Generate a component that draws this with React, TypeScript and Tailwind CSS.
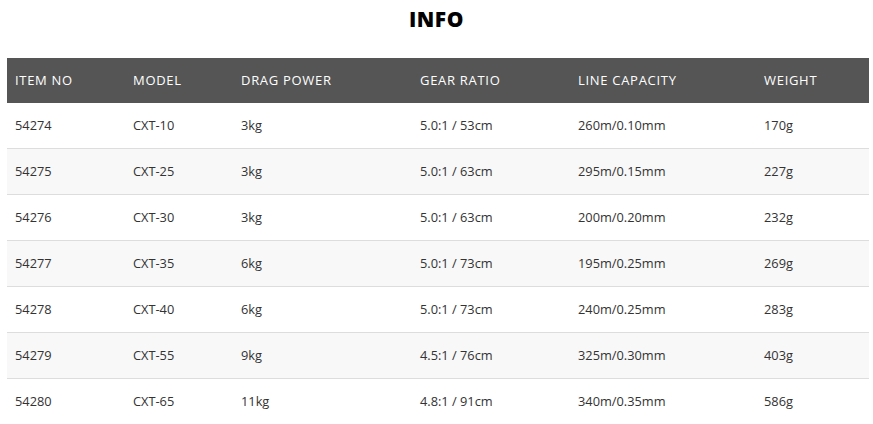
import React from 'react';

const columns = [
  { label: 'ITEM NO', width: 'w-[118px]' },
  { label: 'MODEL', width: 'w-[108px]' },
  { label: 'DRAG POWER', width: 'w-[179px]' },
  { label: 'GEAR RATIO', width: 'w-[158px]' },
  { label: 'LINE CAPACITY', width: 'w-[186px]' },
  { label: 'WEIGHT', width: 'w-[113px]' },
];

const rows = [
  ['54274', 'CXT-10', '3kg', '5.0:1 / 53cm', '260m/0.10mm', '170g'],
  ['54275', 'CXT-25', '3kg', '5.0:1 / 63cm', '295m/0.15mm', '227g'],
  ['54276', 'CXT-30', '3kg', '5.0:1 / 63cm', '200m/0.20mm', '232g'],
  ['54277', 'CXT-35', '6kg', '5.0:1 / 73cm', '195m/0.25mm', '269g'],
  ['54278', 'CXT-40', '6kg', '5.0:1 / 73cm', '240m/0.25mm', '283g'],
  ['54279', 'CXT-55', '9kg', '4.5:1 / 76cm', '325m/0.30mm', '403g'],
  ['54280', 'CXT-65', '11kg', '4.8:1 / 91cm', '340m/0.35mm', '586g'],
];

export default function App() {
  return (
    <div className="w-[873px] h-[424px] bg-white px-[7px] font-['Open_Sans',sans-serif] overflow-hidden">
      <h2 className="h-[58px] pt-[5px] text-center text-[21px] font-extrabold text-black leading-[28px] tracking-[0.5px]">INFO</h2>
      <table className="w-[862px] table-fixed border-collapse text-[13px]">
        <thead>
          <tr className="bg-[#555555] h-[45px]">
            {columns.map((c) => (
              <th key={c.label} className={`${c.width} px-2 text-left font-normal text-white tracking-[0.7px]`}>
                {c.label}
              </th>
            ))}
          </tr>
        </thead>
        <tbody>
          {rows.map((r, i) => (
            <tr
              key={r[0]}
              className={`h-[45.9px] ${i % 2 === 1 ? 'bg-[#f8f8f8]' : 'bg-white'} ${i < rows.length - 1 ? 'border-b border-[#dddddd]' : ''}`}
            >
              {r.map((v, j) => (
                <td key={j} className="px-2 text-[#333333] text-[12.8px]">
                  {v}
                </td>
              ))}
            </tr>
          ))}
        </tbody>
      </table>
    </div>
  );
}
